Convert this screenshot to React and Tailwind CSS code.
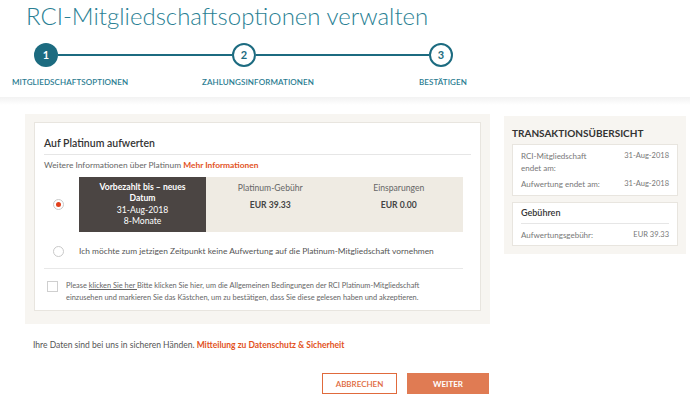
import React from "react";

const Step = ({ n, active }) => (
  <div
    className={`w-[24px] h-[24px] rounded-full flex items-center justify-center text-[11px] font-bold shrink-0 ${
      active
        ? "bg-[#1c6b80] text-white"
        : "bg-white border-2 border-[#1c6b80] text-[#1c6b80]"
    }`}
  >
    {n}
  </div>
);

const Radio = ({ checked }) => (
  <div className="w-[11px] h-[11px] rounded-full border border-[#c9c9c9] bg-white flex items-center justify-center shrink-0">
    {checked && <div className="w-[5px] h-[5px] rounded-full bg-[#e2401c]" />}
  </div>
);

export default function App() {
  return (
    <div
      className="w-[690px] h-[404px] bg-white overflow-hidden text-[#444]"
      style={{ fontFamily: "Lato, 'Open Sans', sans-serif" }}
    >
      {/* Title */}
      <h1 className="pl-[26px] pt-[2px] text-[24px] leading-[28px] font-light text-[#2a7f94]">
        RCI-Mitgliedschaftsoptionen verwalten
      </h1>

      {/* Stepper */}
      <div className="flex items-center pl-[34px] mt-[13px]">
        <Step n="1" active />
        <div className="w-[174px] h-[2px] bg-[#1c6b80]" />
        <Step n="2" />
        <div className="w-[173px] h-[2px] bg-[#1c6b80]" />
        <Step n="3" />
      </div>
      <div className="flex pl-[12px] mt-[10px] text-[8px] leading-[10px] text-[#2a7c91] font-semibold tracking-[0.1px]">
        <span className="w-[190px]">MITGLIEDSCHAFTSOPTIONEN</span>
        <span className="w-[217px]">ZAHLUNGSINFORMATIONEN</span>
        <span>BESTÄTIGEN</span>
      </div>
      <div className="h-[8px] mt-[10px] bg-gradient-to-b from-[#f2f2f2] to-white" />

      {/* Content */}
      <div className="flex items-start gap-[14px] pl-[25px] mt-[9px]">
        {/* Main panel */}
        <div className="w-[465px] bg-[#f7f5f1] pt-[8px] pb-[13px] px-[9px]">
          <div className="bg-white border border-[#e8e5df] px-[9px] pt-[12px] pb-[6px]">
            <div className="text-[10.5px] leading-[16px] font-semibold text-[#333]">
              Auf Platinum aufwerten
            </div>
            <div className="h-px bg-[#e6e6e6] mt-[3px]" />
            <div className="text-[8.4px] leading-[12px] mt-[4px] text-[#666]">
              Weitere Informationen über Platinum{" "}
              <span className="font-bold text-[#e2521d]">Mehr Informationen</span>
            </div>

            {/* Option 1 */}
            <div className="flex items-center mt-[6px]">
              <div className="w-[35px] pl-[9px]">
                <Radio checked />
              </div>
              <div className="w-[127px] h-[55px] bg-[#4b4543] text-white text-[8.6px] leading-[11.5px] flex flex-col items-center justify-center">
                <span className="font-bold">Vorbezahlt bis – neues</span>
                <span className="font-bold">Datum</span>
                <span>31-Aug-2018</span>
                <span>8-Monate</span>
              </div>
              <div className="w-[257px] h-[55px] bg-[#efebe3] flex pt-[5px] text-[8.6px] leading-[12px]">
                <div className="flex-1 flex flex-col items-center gap-[5px]">
                  <span className="text-[#666]">Platinum-Gebühr</span>
                  <span className="font-bold text-[#444]">EUR 39.33</span>
                </div>
                <div className="flex-1 flex flex-col items-center gap-[5px]">
                  <span className="text-[#666]">Einsparungen</span>
                  <span className="font-bold text-[#444]">EUR 0.00</span>
                </div>
              </div>
            </div>

            {/* Option 2 */}
            <div className="flex items-center mt-[13px] text-[8.4px] leading-[12px] text-[#555]">
              <div className="w-[35px] pl-[9px]">
                <Radio />
              </div>
              <span>Ich möchte zum jetzigen Zeitpunkt keine Aufwertung auf die Platinum-Mitgliedschaft vornehmen</span>
            </div>
            <div className="h-px bg-[#e8e8e8] mt-[11px] w-[419px]" />

            {/* Terms */}
            <div className="flex items-start mt-[11px]">
              <div className="w-[11px] h-[11px] border border-[#cfcfcf] bg-white ml-[3px] mt-[1px] shrink-0" />
              <p className="ml-[8px] text-[7.4px] leading-[12px] text-[#666]">
                Please <span className="underline">klicken Sie her </span>Bitte klicken Sie hier, um die Allgemeinen Bedingungen der RCI Platinum-Mitgliedschaft
                <br />
                einzusehen und markieren Sie das Kästchen, um zu bestätigen, dass Sie diese gelesen haben und akzeptieren.
              </p>
            </div>
          </div>
        </div>

        {/* Sidebar */}
        <div className="w-[182px] mt-[2px] bg-[#f7f5f1] px-[8px] pt-[11px] pb-[8px]">
          <div className="text-[10px] leading-[12px] font-bold text-[#333]">TRANSAKTIONSÜBERSICHT</div>
          <div className="bg-white border border-[#e8e5df] mt-[5px] px-[8px] pt-[5px] pb-[5px] text-[8px] leading-[12px] text-[#777]">
            <div className="flex justify-between">
              <span>
                RCI-Mitgliedschaft
                <br />
                endet am:
              </span>
              <span className="text-[7.5px]">31-Aug-2018</span>
            </div>
            <div className="flex justify-between mt-[4px]">
              <span>Aufwertung endet am:</span>
              <span className="text-[7.5px]">31-Aug-2018</span>
            </div>
          </div>
          <div className="bg-white border border-[#e8e5df] mt-[6px] px-[8px] pt-[4px] pb-[4px]">
            <div className="text-[9px] leading-[12px] font-semibold text-[#333]">Gebühren</div>
            <div className="h-px bg-[#e6e6e6] mt-[4px]" />
            <div className="flex justify-between mt-[5px] text-[8px] leading-[12px] text-[#777]">
              <span>Aufwertungsgebühr:</span>
              <span className="text-[7.5px]">EUR 39.33</span>
            </div>
          </div>
        </div>
      </div>

      {/* Privacy */}
      <div className="pl-[33px] mt-[15px] text-[8.5px] leading-[12px] text-[#555]">
        Ihre Daten sind bei uns in sicheren Händen.{" "}
        <span className="font-bold text-[#e2521d]">Mitteilung zu Datenschutz &amp; Sicherheit</span>
      </div>

      {/* Buttons */}
      <div className="flex pl-[322px] mt-[22px] gap-[10px]">
        <button className="w-[75px] h-[21px] border border-[#e06a3c] bg-white text-[#e06a3c] text-[8px] font-semibold">
          ABBRECHEN
        </button>
        <button className="w-[82px] h-[21px] bg-[#e07b53] text-white text-[8px] font-bold">
          WEITER
        </button>
      </div>
    </div>
  );
}
